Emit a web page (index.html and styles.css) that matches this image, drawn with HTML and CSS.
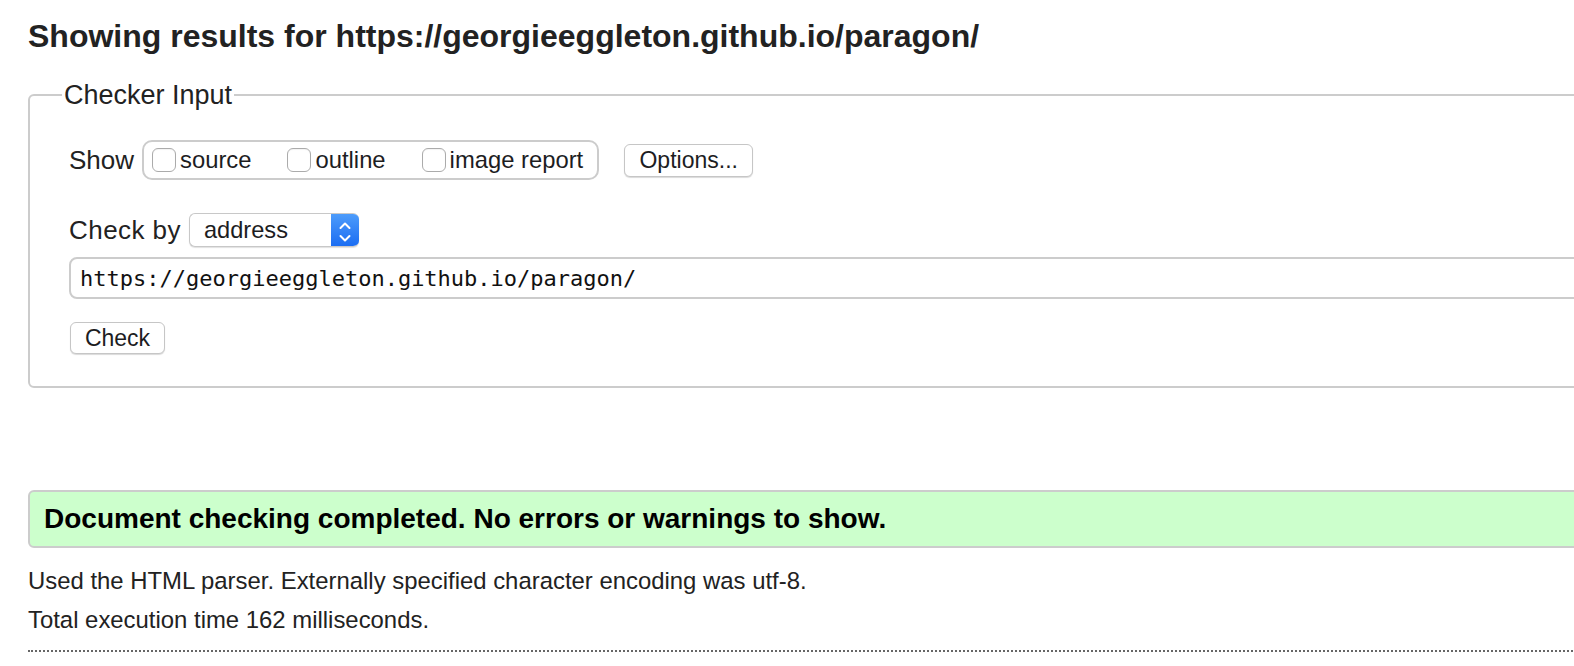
FILE: index.html
```html
<!DOCTYPE html>
<html lang="en">
<head>
<meta charset="utf-8">
<title>Showing results</title>
<link rel="stylesheet" href="styles.css">
</head>
<body>
<div class="page">
  <h2 class="heading">Showing results for https://georgieeggleton.github.io/paragon/</h2>
  <form class="checker">
    <fieldset class="checker-fs">
      <legend class="checker-legend">Checker Input</legend>
      <div class="row row-show">
        <span class="row-label show-label">Show</span>
        <div class="group">
          <label class="opt"><input type="checkbox" class="cb"><span>source</span></label>
          <label class="opt"><input type="checkbox" class="cb"><span>outline</span></label>
          <label class="opt"><input type="checkbox" class="cb"><span>image report</span></label>
        </div>
        <button type="button" class="btn btn-options">Options...</button>
      </div>
      <div class="row row-by">
        <span class="row-label by-label">Check by</span>
        <div class="select">
          <span class="select-text">address</span>
          <span class="select-arrows">
            <svg width="28" height="34" viewBox="0 0 28 34"><path d="M9.5 15 L14 10.5 L18.5 15" fill="none" stroke="#fff" stroke-width="2" stroke-linecap="round" stroke-linejoin="round"/><path d="M9.5 23 L14 27.5 L18.5 23" fill="none" stroke="#fff" stroke-width="2" stroke-linecap="round" stroke-linejoin="round"/></svg>
          </span>
        </div>
      </div>
      <div class="url">https://georgieeggleton.github.io/paragon/</div>
      <button type="button" class="btn btn-check">Check</button>
    </fieldset>
  </form>
  <div class="success">Document checking completed. No errors or warnings to show.</div>
  <p class="info info-first">Used the HTML parser. Externally specified character encoding was utf-8.</p>
  <p class="info">Total execution time 162 milliseconds.</p>
  <hr class="dots">
</div>
</body>
</html>
```
FILE: styles.css
```css
html, body {
  margin: 0;
  padding: 0;
  overflow: hidden;
  background: #fff;
}
body {
  font-family: "Liberation Sans", Arial, Helvetica, sans-serif;
  color: #222;
}
.page {
  width: 1700px;
  padding-left: 28px;
}
.heading {
  margin: 16px 0 0;
  font-size: 32px;
  line-height: 40px;
  font-weight: bold;
  color: #222;
}
.checker { margin: 0; }
.checker-fs {
  margin: 23px 0 0;
  border: 2px solid #cccccc;
  border-radius: 6px;
  padding: 29px 0 32px 39px;
  min-width: 0;
}
.checker-legend {
  font-size: 27px;
  line-height: 32px;
  padding: 0 2px;
  margin-left: -7px;
  color: #222;
}
.row {
  display: flex;
  align-items: center;
}
.row-label {
  font-size: 26px;
  color: #222;
}
.row-show { height: 40px; }
.show-label { margin-right: 8px; }
.group {
  display: flex;
  align-items: center;
  height: 40px;
  box-sizing: border-box;
  border: 2px solid #cccccc;
  border-radius: 10px;
  padding: 0 14px 0 8px;
}
.opt {
  display: flex;
  align-items: center;
  gap: 4px;
  font-size: 23.8px;
  color: #1d1d1f;
}
.opt + .opt { margin-left: 36px; }
.cb {
  appearance: none;
  -webkit-appearance: none;
  margin: 0;
  width: 24px;
  height: 24px;
  box-sizing: border-box;
  border: 1.5px solid #ababab;
  border-radius: 6px;
  background: #fff;
  box-shadow: inset 0 1px 1px rgba(0,0,0,0.05);
}
.btn {
  font-family: "Liberation Sans", Arial, sans-serif;
  font-size: 23px;
  color: #1d1d1f;
  background: #fff;
  border: 1px solid #c6c6c6;
  border-radius: 6px;
  box-shadow: 0 1px 1px rgba(0,0,0,0.15);
  box-sizing: border-box;
  padding: 0;
}
.btn-options {
  margin-left: 25px;
  width: 129px;
  height: 33px;
}
.row-by {
  margin-top: 33px;
  height: 34px;
}
.by-label {
  margin-right: 8px;
  letter-spacing: 0.45px;
}
.select {
  display: flex;
  width: 170px;
  height: 34px;
  box-sizing: border-box;
  border: 1px solid #c8c8c8;
  border-right: 0;
  border-radius: 6px;
  overflow: hidden;
  box-shadow: 0 1px 1px rgba(0,0,0,0.12);
  background: #fff;
}
.select-text {
  flex: 1;
  padding-left: 14px;
  font-size: 23.6px;
  line-height: 32px;
  color: #1d1d1f;
}
.select-arrows {
  width: 28px;
  display: flex;
  align-items: center;
  justify-content: center;
  background: linear-gradient(#4d9cfb, #1b6df2);
}
.select-arrows svg { display: block; margin-top: -1px; }
.url {
  margin-top: 10px;
  height: 42px;
  box-sizing: border-box;
  border: 2px solid #cccccc;
  border-radius: 8px;
  padding-left: 9px;
  display: flex;
  align-items: center;
  font-family: "DejaVu Sans Mono", "Liberation Mono", monospace;
  font-size: 22px;
  color: #111;
}
.btn-check {
  display: block;
  margin-top: 23px;
  margin-left: 1px;
  width: 95px;
  height: 32px;
}
.success {
  margin-top: 102px;
  height: 58px;
  box-sizing: border-box;
  border: 2px solid #cccccc;
  border-radius: 6px;
  background: #ccffcc;
  padding-left: 14px;
  display: flex;
  align-items: center;
  font-size: 28px;
  font-weight: bold;
  color: #000;
}
.info {
  margin: 9px 0 0;
  font-size: 23.9px;
  line-height: 30px;
  color: #222;
}
.info-first { margin-top: 18px; }
.dots {
  margin: 15px 0 0;
  border: 0;
  border-top: 2px dotted #666;
  height: 0;
}
```
